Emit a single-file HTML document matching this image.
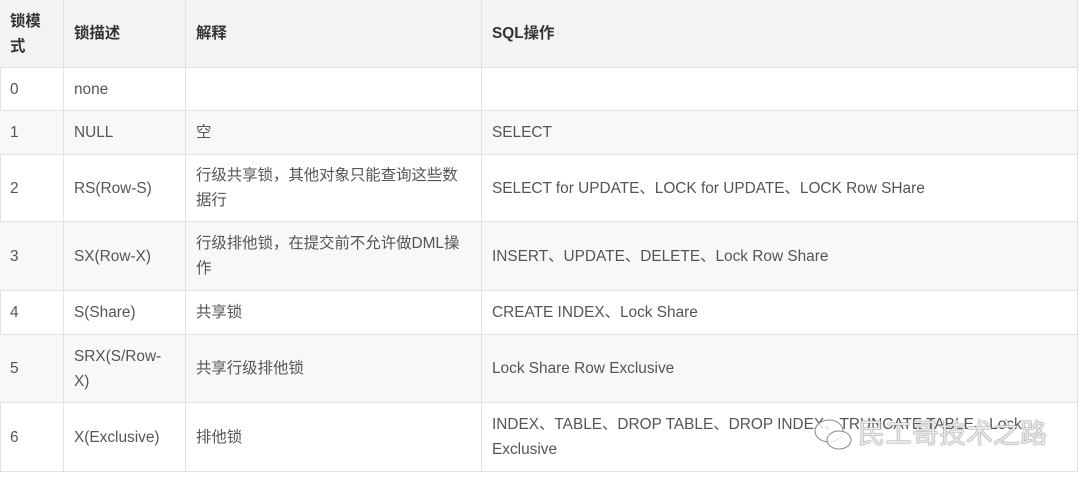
<!DOCTYPE html>
<html><head><meta charset="utf-8"><style>
body{margin:0;width:1080px;height:480px;background:#fff;overflow:hidden;font-family:"Liberation Sans","Noto Sans CJK SC",sans-serif;font-size:15.4px;color:#555}
.c{position:absolute;box-sizing:border-box;border-right:1px solid #e2e2e2;border-bottom:1px solid #e2e2e2;display:flex;align-items:center;padding:0 10px;line-height:25px}
.h{font-weight:bold;color:#333;background:#f1f3f4}
.g{background:#f8f8f8}
.wm{position:absolute;left:858px;top:412px;font-size:27px;color:rgba(255,255,255,.85);text-shadow:0 0 1px #666,0 0 1px #666;font-family:"Noto Sans CJK SC",sans-serif}
</style></head><body>
<div style="position:absolute;left:0;top:0;width:1078px;height:472px;border-left:1px solid #e2e2e2;border-top:1px solid #e2e2e2;box-sizing:border-box"></div>
<div id="t"></div>
<script>
var cols=[0,64,186,482,1078],rows=[0,68,111,155,222,291,335,403,472];
var data=[["锁模<br>式","锁描述","解释","SQL操作"],["0","none","",""],["1","NULL","空","SELECT"],["2","RS(Row-S)","行级共享锁，其他对象只能查询这些数<br>据行","SELECT for UPDATE、LOCK for UPDATE、LOCK Row SHare"],["3","SX(Row-X)","行级排他锁，在提交前不允许做DML操<br>作","INSERT、UPDATE、DELETE、Lock Row Share"],["4","S(Share)","共享锁","CREATE INDEX、Lock Share"],["5","SRX(S/Row-<br>X)","共享行级排他锁","Lock Share Row Exclusive"],["6","X(Exclusive)","排他锁","INDEX、TABLE、DROP TABLE、DROP INDEX、TRUNCATE TABLE、Lock<br>Exclusive"]];
var h="";
for(var r=0;r<8;r++)for(var c=0;c<4;c++){
var cls="c"+(r==0?" h":(r%2==0?" g":""));
h+='<div class="'+cls+'" style="left:'+cols[c]+'px;top:'+rows[r]+'px;width:'+(cols[c+1]-cols[c])+'px;height:'+(rows[r+1]-rows[r])+'px"><div>'+data[r][c]+'</div></div>';}
document.getElementById("t").innerHTML=h;
</script>
<svg style="position:absolute;left:812px;top:416px" width="44" height="40" viewBox="0 0 44 40"><ellipse cx="17" cy="15" rx="14" ry="11" fill="rgba(255,255,255,.8)" stroke="#888"/><ellipse cx="27" cy="24" rx="12" ry="9" fill="rgba(255,255,255,.8)" stroke="#888"/></svg>
<div class="wm">民工哥技术之路</div>
</body></html>
